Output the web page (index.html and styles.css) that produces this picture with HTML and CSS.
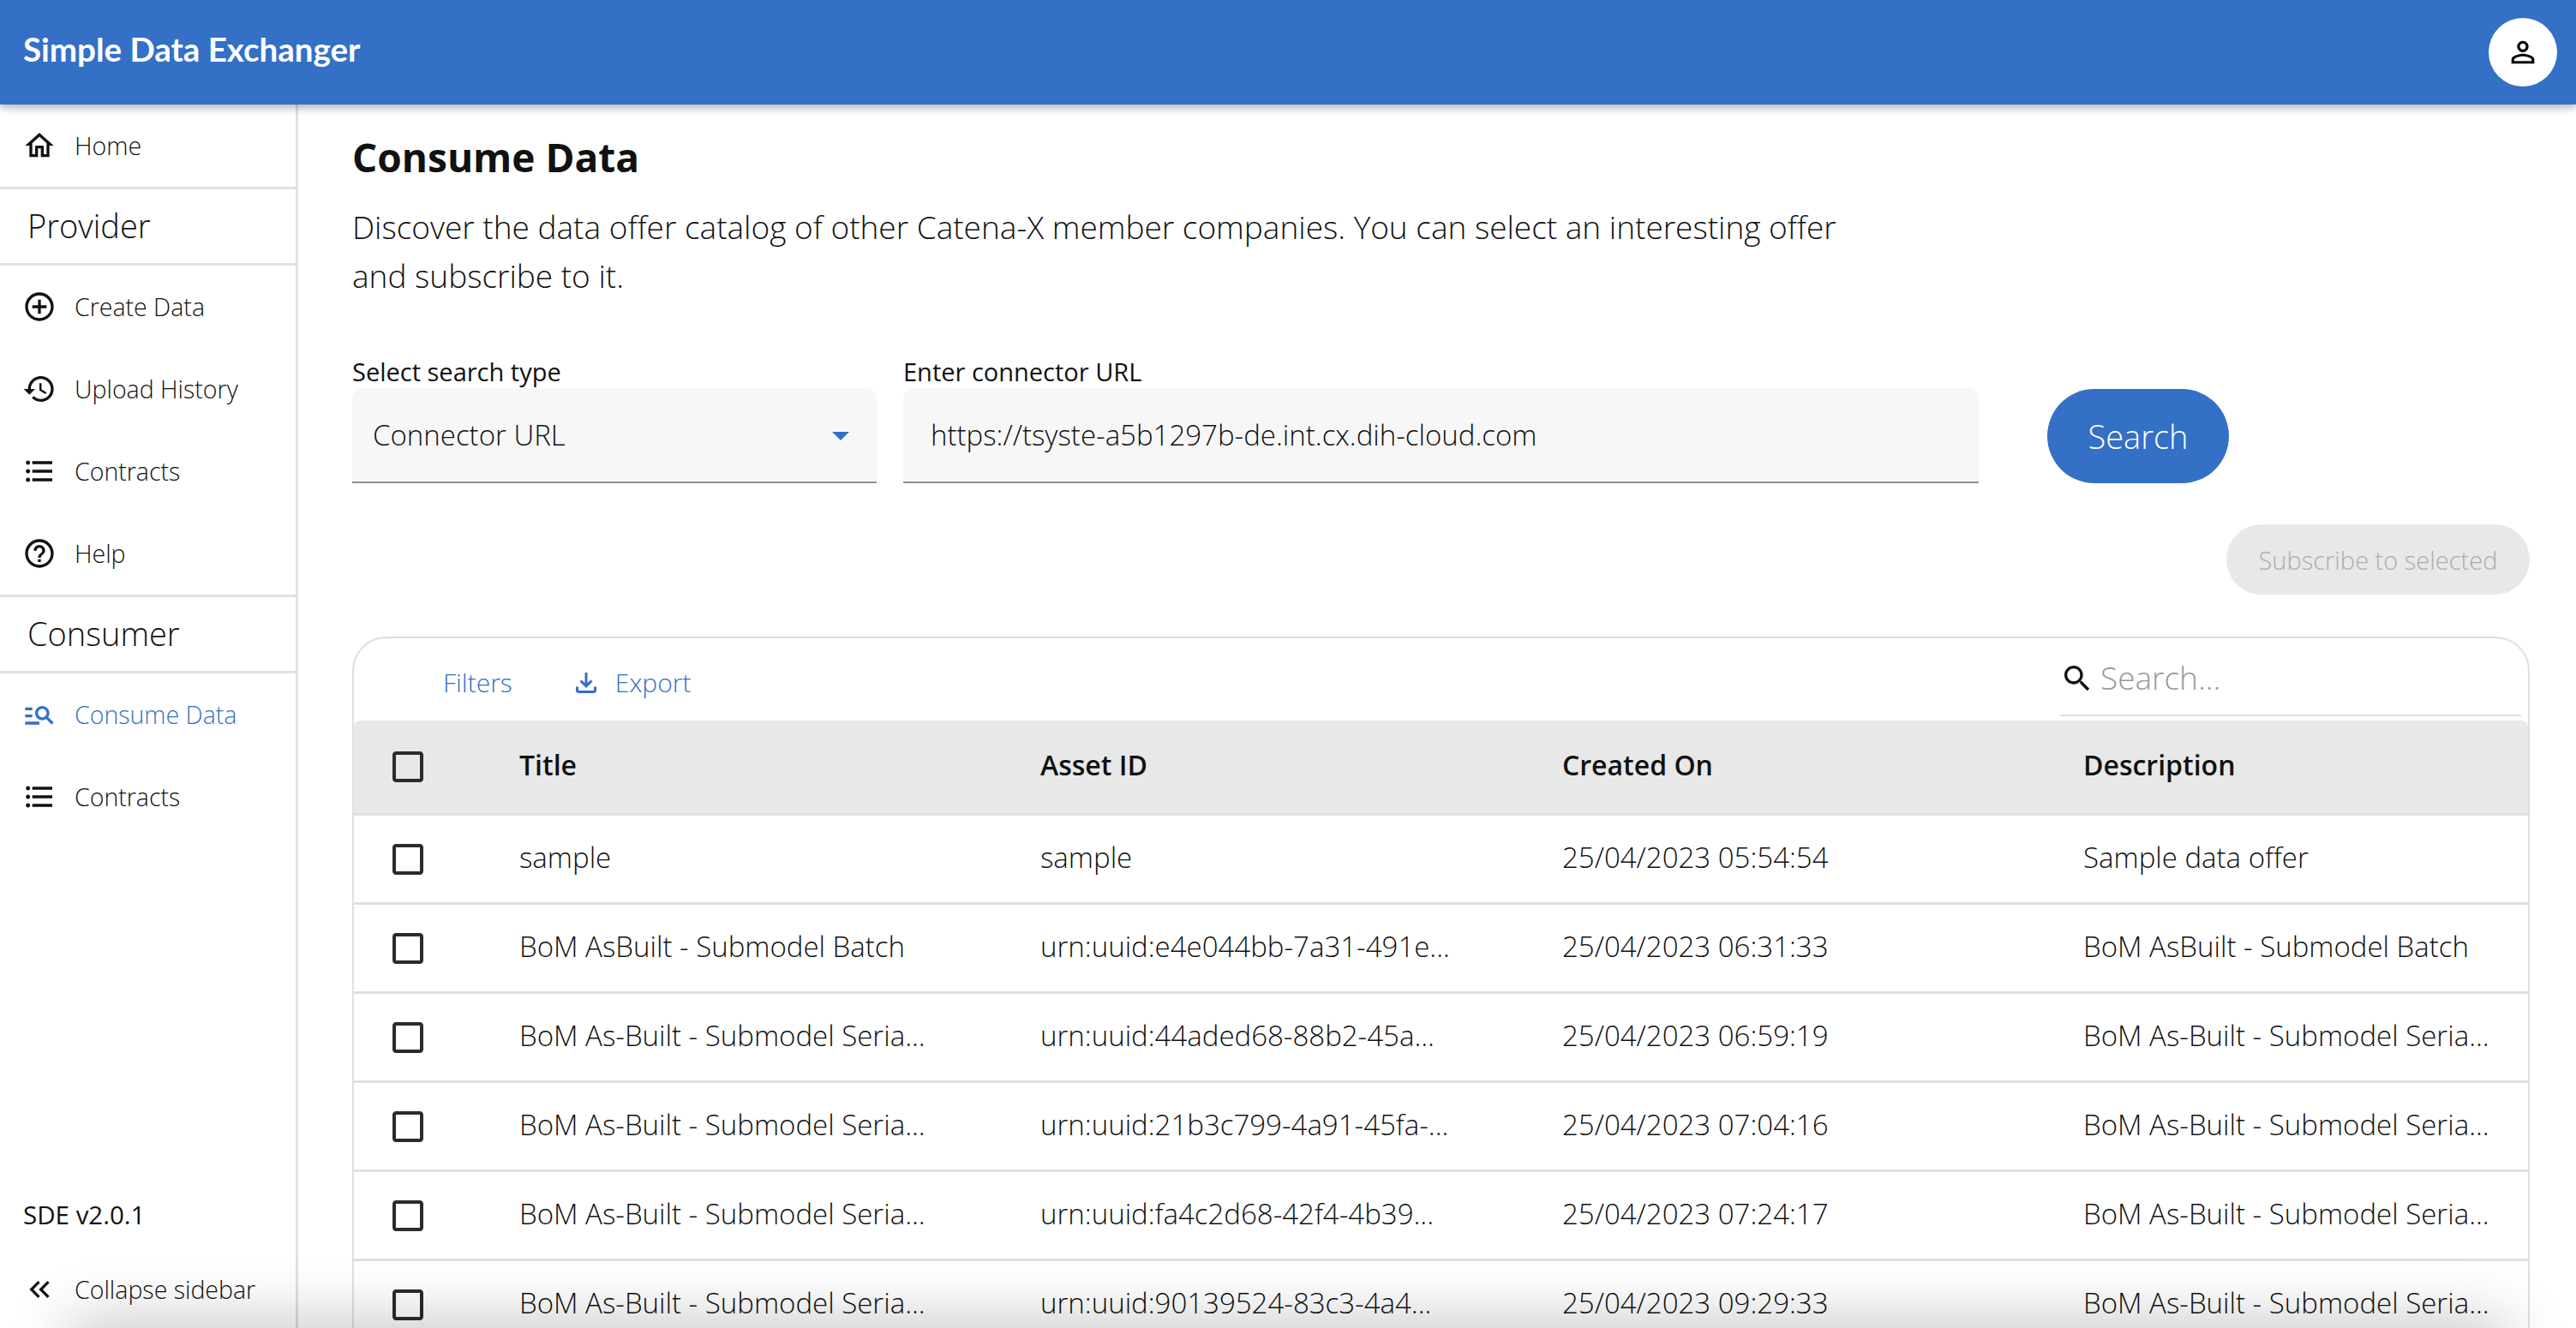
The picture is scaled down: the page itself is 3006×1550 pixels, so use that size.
FILE: index.html
```html
<!DOCTYPE html>
<html lang="en">
<head>
  <meta charset="UTF-8" />
  <title>Simple Data Exchanger</title>
  <link rel="stylesheet" href="styles.css">
</head>
<body>
  <svg class="defs" aria-hidden="true">
    <symbol id="i-check" viewBox="0 0 24 24"><path d="M19 5v14H5V5h14m0-2H5c-1.1 0-2 .9-2 2v14c0 1.1.9 2 2 2h14c1.1 0 2-.9 2-2V5c0-1.1-.9-2-2-2z"/></symbol>
    <symbol id="i-list" viewBox="0 0 24 24"><path d="M4 10.5c-.83 0-1.5.67-1.5 1.5s.67 1.5 1.5 1.5 1.5-.67 1.5-1.5-.67-1.5-1.5-1.5zm0-6c-.83 0-1.5.67-1.5 1.5S3.17 7.5 4 7.5 5.5 6.83 5.5 6 4.83 4.5 4 4.5zm0 12c-.83 0-1.5.68-1.5 1.5s.68 1.5 1.5 1.5 1.5-.68 1.5-1.5-.67-1.5-1.5-1.5zM7 19h14v-2H7v2zm0-6h14v-2H7v2zm0-8v2h14V5H7z"/></symbol>
  </svg>

  <header class="topbar">
    <div class="brand">Simple Data Exchanger</div>
    <button class="avatar">
      <svg class="icon" viewBox="0 0 24 24"><path d="M12 5.9c1.16 0 2.1.94 2.1 2.1s-.94 2.1-2.1 2.1S9.9 9.16 9.9 8s.94-2.1 2.1-2.1m0 9c2.97 0 6.1 1.46 6.1 2.1v1.1H5.9V17c0-.64 3.13-2.1 6.1-2.1M12 4C9.79 4 8 5.79 8 8s1.79 4 4 4 4-1.79 4-4-1.79-4-4-4zm0 9c-2.67 0-8 1.34-8 4v3h16v-3c0-2.66-5.33-4-8-4z"/></svg>
    </button>
  </header>

  <div class="layout">
    <aside class="sidebar">
      <nav class="nav">
        <a class="nav-item nav-home">
          <svg class="icon" viewBox="0 0 24 24"><path d="m12 5.69 5 4.5V18h-2v-6H9v6H7v-7.81l5-4.5M12 3 2 12h3v8h6v-6h2v6h6v-8h3L12 3z"/></svg>
          Home
        </a>
        <div class="nav-heading">Provider</div>
        <a class="nav-item">
          <svg class="icon" viewBox="0 0 24 24"><path d="M13 7h-2v4H7v2h4v4h2v-4h4v-2h-4V7zm-1-5C6.48 2 2 6.48 2 12s4.48 10 10 10 10-4.48 10-10S17.52 2 12 2zm0 18c-4.41 0-8-3.59-8-8s3.59-8 8-8 8 3.59 8 8-3.59 8-8 8z"/></svg>
          Create Data
        </a>
        <a class="nav-item">
          <svg class="icon" viewBox="0 0 24 24"><path d="M13 3c-4.97 0-9 4.03-9 9H1l3.89 3.89.07.14L9 12H6c0-3.87 3.13-7 7-7s7 3.13 7 7-3.13 7-7 7c-1.93 0-3.68-.79-4.94-2.06l-1.42 1.42C8.27 19.99 10.51 21 13 21c4.97 0 9-4.03 9-9s-4.03-9-9-9zm-1 5v5l4.28 2.54.72-1.21-3.5-2.08V8H12z"/></svg>
          Upload History
        </a>
        <a class="nav-item">
          <svg class="icon"><use href="#i-list"/></svg>
          Contracts
        </a>
        <a class="nav-item">
          <svg class="icon" viewBox="0 0 24 24"><path d="M11 18h2v-2h-2v2zm1-16C6.48 2 2 6.48 2 12s4.48 10 10 10 10-4.48 10-10S17.52 2 12 2zm0 18c-4.41 0-8-3.59-8-8s3.59-8 8-8 8 3.59 8 8-3.59 8-8 8zm0-14c-2.21 0-4 1.79-4 4h2c0-1.1.9-2 2-2s2 .9 2 2c0 2-3 1.75-3 5h2c0-2.25 3-2.5 3-5 0-2.21-1.79-4-4-4z"/></svg>
          Help
        </a>
        <div class="nav-heading">Consumer</div>
        <a class="nav-item active">
          <svg class="icon" viewBox="0 0 24 24"><path d="M7 9H2V7h5v2zm0 3H2v2h5v-2zm13.59 7-3.83-3.83c-.8.52-1.74.83-2.76.83-2.76 0-5-2.24-5-5s2.24-5 5-5 5 2.24 5 5c0 1.02-.31 1.96-.83 2.75L22 17.59 20.59 19zM17 11c0-1.65-1.35-3-3-3s-3 1.35-3 3 1.35 3 3 3 3-1.35 3-3zM2 19h10v-2H2v2z"/></svg>
          Consume Data
        </a>
        <a class="nav-item">
          <svg class="icon"><use href="#i-list"/></svg>
          Contracts
        </a>
      </nav>
      <div class="side-foot">
        <div class="version">SDE v2.0.1</div>
        <a class="nav-item">
          <svg class="icon" viewBox="0 0 24 24"><path d="M17.59 18 19 16.59 14.42 12 19 7.41 17.59 6l-6 6z"/><path d="M11 18l1.41-1.41L7.83 12l4.58-4.59L11 6l-6 6z"/></svg>
          Collapse sidebar
        </a>
      </div>
    </aside>

    <main class="content">
      <h1>Consume Data</h1>
      <p class="intro">Discover the data offer catalog of other Catena-X member companies. You can select an interesting offer<br>and subscribe to it.</p>

      <div class="search-form">
        <div class="field field-type">
          <label>Select search type</label>
          <div class="input">
            Connector URL
            <svg class="caret" viewBox="0 0 24 24"><path d="M7 10l5 5 5-5z"/></svg>
          </div>
        </div>
        <div class="field field-url">
          <label>Enter connector URL</label>
          <div class="input input-url">https://tsyste-a5b1297b-de.int.cx.dih-cloud.com</div>
        </div>
        <button class="btn-search">Search</button>
      </div>

      <div class="actions">
        <button class="btn-subscribe" disabled>Subscribe to selected</button>
      </div>

      <section class="grid">
        <div class="toolbar">
          <a class="tool tool-filters">Filters</a>
          <a class="tool">
            <svg class="icon" viewBox="0 0 24 24"><path d="M18 15v3H6v-3H4v3c0 1.1.9 2 2 2h12c1.1 0 2-.9 2-2v-3h-2zm-1-4-1.41-1.41L13 12.17V4h-2v8.17L8.41 9.59 7 11l5 5 5-5z"/></svg>
            Export
          </a>
          <div class="quick-search">
            <svg class="icon" viewBox="0 0 24 24"><path d="M15.5 14h-.79l-.28-.27C15.41 12.59 16 11.11 16 9.5 16 5.91 13.09 3 9.5 3S3 5.91 3 9.5 5.91 16 9.5 16c1.61 0 3.09-.59 4.23-1.57l.27.28v.79l5 4.99L20.49 19l-4.99-5zm-6 0C7.01 14 5 11.99 5 9.5S7.01 5 9.5 5 14 7.01 14 9.5 11.99 14 9.5 14z"/></svg>
            <span>Search...</span>
          </div>
        </div>

        <div class="row row-head">
          <svg class="check"><use href="#i-check"/></svg>
          <div>Title</div><div>Asset ID</div><div>Created On</div><div>Description</div>
        </div>
        <div class="row">
          <svg class="check"><use href="#i-check"/></svg>
          <div>sample</div><div>sample</div><div>25/04/2023 05:54:54</div><div>Sample data offer</div>
        </div>
        <div class="row">
          <svg class="check"><use href="#i-check"/></svg>
          <div>BoM AsBuilt - Submodel Batch</div><div>urn:uuid:e4e044bb-7a31-491e...</div><div>25/04/2023 06:31:33</div><div>BoM AsBuilt - Submodel Batch</div>
        </div>
        <div class="row">
          <svg class="check"><use href="#i-check"/></svg>
          <div>BoM As-Built - Submodel Seria...</div><div>urn:uuid:44aded68-88b2-45a...</div><div>25/04/2023 06:59:19</div><div>BoM As-Built - Submodel Seria...</div>
        </div>
        <div class="row">
          <svg class="check"><use href="#i-check"/></svg>
          <div>BoM As-Built - Submodel Seria...</div><div>urn:uuid:21b3c799-4a91-45fa-...</div><div>25/04/2023 07:04:16</div><div>BoM As-Built - Submodel Seria...</div>
        </div>
        <div class="row">
          <svg class="check"><use href="#i-check"/></svg>
          <div>BoM As-Built - Submodel Seria...</div><div>urn:uuid:fa4c2d68-42f4-4b39...</div><div>25/04/2023 07:24:17</div><div>BoM As-Built - Submodel Seria...</div>
        </div>
        <div class="row">
          <svg class="check"><use href="#i-check"/></svg>
          <div>BoM As-Built - Submodel Seria...</div><div>urn:uuid:90139524-83c3-4a4...</div><div>25/04/2023 09:29:33</div><div>BoM As-Built - Submodel Seria...</div>
        </div>
      </section>
    </main>
  </div>

  <div class="bottom-fade"></div>
</body>
</html>
```

FILE: styles.css
```css
* {
  box-sizing: border-box;
}
html, body {
  height: 100%;
}
body {
  margin: 0;
  overflow: hidden;
  background: #fff;
  color: #111;
  font-family: "Open Sans", "Liberation Sans", sans-serif;
  font-weight: 300;
  display: flex;
  flex-direction: column;
}
.defs {
  display: none;
}
.icon {
  width: 40px;
  height: 40px;
  flex: none;
  fill: currentColor;
}

/* top bar */
.topbar {
  height: 122px;
  flex: none;
  display: flex;
  align-items: center;
  justify-content: space-between;
  padding: 0 22px 0 27px;
  background: #3470c6;
  box-shadow: 0 3px 10px rgba(0, 0, 0, 0.35);
  position: relative;
  z-index: 2;
}
.brand {
  padding-bottom: 8px;
  font-family: "Lato", sans-serif;
  font-size: 38.5px;
  font-weight: 700;
  color: #fff;
}
.avatar {
  width: 80px;
  height: 80px;
  padding: 0;
  border: none;
  border-radius: 50%;
  background: #fff;
  color: #000;
  display: flex;
  align-items: center;
  justify-content: center;
}

/* sidebar */
.layout {
  flex: 1;
  display: flex;
  min-height: 0;
}
.sidebar {
  width: 348px;
  flex: none;
  display: flex;
  flex-direction: column;
  justify-content: space-between;
  border-right: 3px solid #e0e0e0;
}
.nav-item {
  height: 96px;
  display: flex;
  align-items: center;
  gap: 21px;
  padding-left: 26px;
  font-size: 28.5px;
  color: #111;
}
.nav-item.active {
  color: #3470c6;
}
.nav-heading {
  height: 92px;
  display: flex;
  align-items: center;
  padding: 0 0 3px 32px;
  font-size: 38px;
  border-top: 3px solid #e0e0e0;
  border-bottom: 3px solid #e0e0e0;
}
.version {
  margin-bottom: 22px;
  padding-left: 27px;
  font-size: 29.5px;
  font-weight: 500;
}
.side-foot .nav-item {
  height: 90px;
}

/* main content */
.content {
  flex: 1;
  min-width: 0;
  padding: 25px 54px 0 63px;
}
h1 {
  margin: 0;
  font-size: 46px;
  font-weight: 700;
  line-height: 72px;
}
.intro {
  margin: 17px 0 0;
  font-size: 37px;
  line-height: 57px;
}
.search-form {
  margin-top: 66px;
  display: flex;
  align-items: flex-end;
}
.field label {
  display: block;
  font-size: 29px;
  font-weight: 500;
  line-height: 36px;
  margin-bottom: 1px;
}
.field-type {
  width: 612px;
  margin-right: 31px;
}
.field-url {
  width: 1255px;
  margin-right: 80px;
}
.input {
  height: 111px;
  display: flex;
  align-items: center;
  justify-content: space-between;
  padding: 0 24px;
  background: #f7f7f7;
  border-bottom: 2px solid #8f8f8f;
  border-radius: 12px 12px 0 0;
  font-size: 33px;
}
.input-url {
  padding-left: 32px;
}
.caret {
  width: 48px;
  height: 48px;
  margin-right: -6px;
  fill: #3470c6;
}
.btn-search {
  width: 212px;
  height: 110px;
  border: none;
  border-radius: 55px;
  background: #3470c6;
  color: #fff;
  font: inherit;
  font-size: 38px;
}
.actions {
  margin-top: 48px;
  display: flex;
  justify-content: flex-end;
}
.btn-subscribe {
  width: 354px;
  height: 82px;
  border: none;
  border-radius: 41px;
  background: #e8e8e8;
  color: #adadad;
  font: inherit;
  font-size: 29px;
}

/* data grid */
.grid {
  margin-top: 49px;
  border: 2px solid #e0e0e0;
  border-radius: 40px 40px 0 0;
}
.toolbar {
  height: 96px;
  display: flex;
  align-items: center;
  padding-right: 8px;
  color: #3470c6;
}
.tool {
  display: flex;
  align-items: center;
  gap: 16px;
  font-size: 30px;
  padding-top: 7px;
}
.tool .icon {
  width: 36px;
  height: 36px;
}
.tool-filters {
  margin-left: 104px;
  margin-right: 68px;
}
.quick-search {
  margin-left: auto;
  width: 538px;
  height: 86px;
  display: flex;
  align-items: center;
  gap: 7px;
  border-bottom: 2px solid #e0e0e0;
  color: #111;
}
.quick-search span {
  padding-bottom: 3px;
  font-size: 37px;
  color: #999;
}
.row {
  height: 104px;
  display: grid;
  grid-template-columns: 193px 608px 609px 608px 1fr;
  align-items: center;
  font-size: 33px;
  border-bottom: 3px solid #e0e0e0;
  white-space: nowrap;
}
.row > div {
  padding-bottom: 5px;
}
.row-head {
  height: 111px;
  background: #e8e8e8;
  border-radius: 8px 8px 0 0;
  font-size: 32px;
  font-weight: 600;
}
.check {
  width: 48px;
  height: 48px;
  margin-left: 39px;
  fill: #2b2b2b;
}

/* soft shadow rising from the bottom edge of the window */
.bottom-fade {
  position: fixed;
  left: 90px;
  right: 90px;
  bottom: -60px;
  height: 60px;
  box-shadow: 0 0 70px 10px rgba(0, 0, 0, 0.22);
  pointer-events: none;
}
```
